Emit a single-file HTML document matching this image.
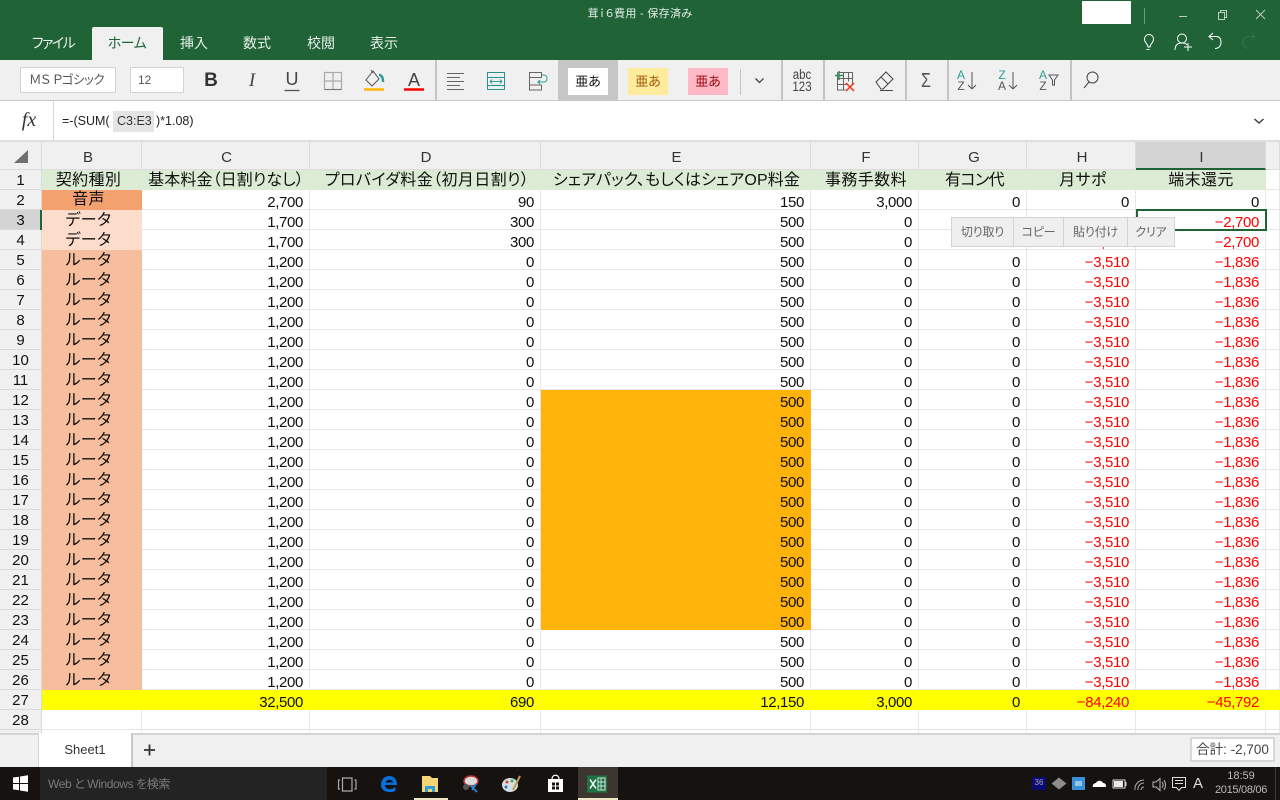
<!DOCTYPE html>
<html lang="ja"><head><meta charset="utf-8"><title>Excel</title>
<style>
*{box-sizing:border-box}
html,body{margin:0;padding:0;width:1280px;height:800px;overflow:hidden;background:#fff;font-family:"Liberation Sans","Noto Sans CJK JP",sans-serif;color:#222;font-feature-settings:"palt"}
.a{position:absolute}
.t{position:absolute;white-space:nowrap;transform:translateX(-50%);text-align:center}
svg{position:absolute;overflow:visible}
table{position:absolute;left:0;top:142px;border-collapse:separate;border-spacing:0;table-layout:fixed;width:1280px}
td,th{padding:7px 6px 0 0;height:20px;line-height:12px;font-size:15px;letter-spacing:-.35px;font-weight:normal;text-align:right;vertical-align:top;border-right:1px solid #e6e6e6;border-bottom:1px solid #e6e6e6;white-space:nowrap;overflow:hidden;color:#111}
th{background:#f0f0f0;text-align:center;padding:0;color:#333;border-color:#dcdcdc;letter-spacing:0}
tr.h th{height:28px;font-size:15px;padding-top:7px;line-height:18px}
td.n{font-size:15px;text-align:center;padding:2px 0 0;line-height:17px;border-color:#dadada;letter-spacing:0}
tr.g td{background:#dcebd4;border-color:#dcebd4;text-align:center;padding:2px 0 0;font-size:16px;letter-spacing:.4px;line-height:17px}
tr.g td.n{font-size:15px;padding-top:2px;letter-spacing:0;line-height:17px}
td.k{text-align:center;padding:3px 6px 0 0;font-size:16px;letter-spacing:.4px;line-height:16px}
td.v{background:#f3a26f;border-color:#f3a26f;padding-top:2px}
td.d{background:#fcdccb;border-color:#fcdccb}
td.u{background:#f6be9c;border-color:#f6be9c}
td.o{background:#ffb30b;border-color:#ffb30b}
tr.y td{background:#ff0;border-color:#ff0}
.r,tr.y td.r{color:#f00}
.mi{position:absolute;top:217px;height:30px;background:#efefef;border:1px solid #d4d4d4;font-size:12px;letter-spacing:-.2px;color:#666;text-align:center;line-height:28px}
</style></head><body>

<!-- title bar -->
<div class="a" style="left:0;top:0;width:1280px;height:60px;background:#1f6337"></div>
<div class="t" style="left:640px;top:6px;font-size:11px;letter-spacing:.3px;line-height:16px;color:#e4ece7">茸ｉ６費用 - 保存済み</div>
<div class="a" style="left:1082px;top:1px;width:49px;height:23px;background:#fff"></div>
<div class="a" style="left:1144px;top:8px;width:1px;height:16px;background:#6f9c80"></div>
<svg style="left:0;top:0" width="1280" height="60" fill="none" stroke="#b9cdc0" stroke-width="1">
<path d="M1179 16.500h8"/><path d="M1218.500 12.500h6v7h-6zM1220.500 12.500v-2h6v7h-2"/><path d="M1256 10l9 9M1265 10l-9 9"/>
<path d="M1148 47c0-3-3.500-4-3.500-8a4.500 4.500 0 0 1 9 0c0 4-3.500 5-3.500 8zM1146.500 49.500h3" stroke="#fff"/>
<path d="M1175 50c0-5 3-7 7-7s4 1 5 2M1182 43a4.500 4.500 0 1 0 0-9a4.500 4.500 0 0 0 0 9zM1184 47h8M1188 43v8" stroke="#fff"/>
<path d="M1213 40l-4-3.500 4-3.500M1209 36.500h7c4 0 5 3 5 6s-2 6-6 6" stroke="#fff"/>
<path d="M1251 40l4-3.500-4-3.500M1255 36.500h-7c-4 0-5 3-5 6s2 6 6 6" stroke="#34724b"/>
</svg>
<div class="a" style="left:92px;top:27px;width:71px;height:33px;background:#f0f0f0;border-radius:2px 2px 0 0"></div>
<div class="t" style="left:53px;top:33px;font-size:14px;letter-spacing:-1.500px;line-height:20px;color:#e8f0eb">ファイル</div>
<div class="t" style="left:127px;top:33px;font-size:14px;letter-spacing:-.5px;line-height:20px;color:#1f6337">ホーム</div>
<div class="t" style="left:194px;top:33px;font-size:14px;line-height:20px;color:#e8f0eb">挿入</div>
<div class="t" style="left:257px;top:33px;font-size:14px;line-height:20px;color:#e8f0eb">数式</div>
<div class="t" style="left:321px;top:33px;font-size:14px;line-height:20px;color:#e8f0eb">校閲</div>
<div class="t" style="left:384px;top:33px;font-size:14px;line-height:20px;color:#e8f0eb">表示</div>

<!-- ribbon -->
<div class="a" style="left:0;top:60px;width:1280px;height:41px;background:#f0f0f0;border-bottom:1px solid #c8c8c8"></div>
<div class="a" style="left:20px;top:67px;width:96px;height:26px;background:#fff;border:1px solid #d4d4d4;font-size:12.500px;letter-spacing:-.5px;line-height:24px;color:#555;padding-left:8px;white-space:nowrap;overflow:hidden">ＭＳ Ｐゴシック</div>
<div class="a" style="left:130px;top:67px;width:54px;height:26px;background:#fff;border:1px solid #d4d4d4;font-size:12px;line-height:24px;color:#555;padding-left:7px">12</div>
<div class="t" style="left:211px;top:69px;font-size:19px;line-height:24px;font-weight:bold;color:#333">B</div>
<div class="t" style="left:252px;top:69px;font-size:19px;line-height:24px;font-style:italic;font-family:'Liberation Serif',serif;color:#444">I</div>
<div class="t" style="left:292px;top:67px;font-size:18px;line-height:24px;color:#444">U</div>
<div class="t" style="left:414px;top:68px;font-size:18px;line-height:24px;color:#444">A</div>
<div class="a" style="left:435px;top:60px;width:2px;height:40px;background:#c4c4c4"></div>
<div class="a" style="left:558px;top:60px;width:60px;height:40px;background:#c6c6c6"></div>
<div class="a" style="left:568px;top:68px;width:40px;height:27px;background:#fff;font-size:13px;line-height:27px;text-align:center;color:#111">亜あ</div>
<div class="a" style="left:628px;top:68px;width:40px;height:27px;background:#ffeb9c;font-size:13px;line-height:27px;text-align:center;color:#9c5700">亜あ</div>
<div class="a" style="left:688px;top:68px;width:40px;height:27px;background:#ffb9c6;font-size:13px;line-height:27px;text-align:center;color:#9c0006">亜あ</div>
<div class="a" style="left:740px;top:69px;width:1px;height:26px;background:#c4c4c4"></div>
<div class="a" style="left:781px;top:60px;width:2px;height:40px;background:#c4c4c4"></div>
<div class="a" style="left:823px;top:60px;width:2px;height:40px;background:#c4c4c4"></div>
<div class="a" style="left:905px;top:60px;width:2px;height:40px;background:#c4c4c4"></div>
<div class="a" style="left:947px;top:60px;width:2px;height:40px;background:#c4c4c4"></div>
<div class="a" style="left:1070px;top:60px;width:2px;height:40px;background:#c4c4c4"></div>
<div class="t" style="left:802px;top:69px;font-size:13.500px;line-height:12px;color:#444;transform:translateX(-50%) scaleX(.85)">abc<br>123</div>
<div class="t" style="left:926px;top:69px;font-size:20px;line-height:24px;color:#555;transform:translateX(-50%) scaleX(.8)">Σ</div>
<div class="t" style="left:961px;top:70px;font-size:12px;line-height:11px;color:#555"><span style="color:#2e9c98">A</span><br>Z</div>
<div class="t" style="left:1002px;top:70px;font-size:12px;line-height:11px;color:#555"><span style="color:#2e9c98">Z</span><br>A</div>
<div class="t" style="left:1043px;top:70px;font-size:12px;line-height:11px;color:#555"><span style="color:#2e9c98">A</span><br>Z</div>
<svg style="left:0;top:0" width="1280" height="100" fill="none" stroke="#555" stroke-width="1">
<path d="M284.500 90.500h15" stroke-width="1.300"/>
<path d="M324.500 72.500h17v17h-17zM333 72.500v17M324.500 81h17" stroke="#aaa" stroke-width="1.200"/>
<path d="M324.500 89.500h17" stroke="#777"/>
<path d="M373 71l-7 9 6 6 7-7zM371 70l2 3" stroke="#555"/>
<path d="M379 75c3 0 4 3 4 7" stroke="#2e9c98" stroke-width="2.500"/>
<path d="M364 89.500h20" stroke="#ffb400" stroke-width="2.500"/>
<path d="M404 89.500h20" stroke="#f00" stroke-width="2.500"/>
<path d="M447 73.500h17M447 77.500h13M447 81.500h17M447 85.500h13M447 89.500h17" stroke="#666"/>
<path d="M487.500 72.500h17v17h-17zM487.500 77.500h17M487.500 85.500h17" stroke="#2e8f8c"/>
<path d="M490 81.500h12M490 81.500l2-2M490 81.500l2 2M502 81.500l-2-2M502 81.500l-2 2" stroke="#2e9c98"/>
<path d="M529.500 72.500h12v5h-12zM529.500 85h12v5h-12zM529.500 77.500v7.500" stroke="#666"/>
<path d="M542 75h2c4 0 4 7 0 7h-6l2-2M538 82l2 2" stroke="#2e9c98"/>
<path d="M755.500 78.500l4 4 4-4" stroke="#444" stroke-width="1.300"/>
<path d="M837.500 72.500h15v12M837.500 78.500h15M837.500 84.500h9M837.500 90h8M837.500 72.500v18M843.500 72.500v18M848.500 72.500v9" stroke="#666"/>
<path d="M835 75.500h8M839 71v9" stroke="#2e8b57" stroke-width="1.500"/>
<path d="M846 83l8 8M854 83l-8 8" stroke="#f03010" stroke-width="1.500"/>
<path d="M876 82l10-10 7 7-10 10h-2zM881 77l7 7M880 90.500h13" stroke="#444"/>
<path d="M972 72v17M972 89l-4-4M972 89l4-4M1013 72v17M1013 89l-4-4M1013 89l4-4" stroke="#555"/>
<path d="M1049 75h9l-3.500 5v5h-2v-5z" stroke="#555"/>
<path d="M1084 88l5-6" stroke="#444"/>
<path d="M1092.500 83a5.500 5.500 0 1 0 0-11a5.500 5.500 0 0 0 0 11z" stroke="#444"/>
</svg>

<!-- formula bar -->
<div class="a" style="left:0;top:101px;width:1280px;height:41px;background:#fff;border-bottom:2px solid #dedede"></div>
<div class="a" style="left:53px;top:101px;width:1px;height:39px;background:#d8d8d8"></div>
<div class="t" style="left:29px;top:108px;font-family:'Liberation Serif',serif;font-style:italic;font-size:20px;line-height:24px;color:#333">fx</div>
<div class="a" style="left:113px;top:111px;width:41px;height:21px;background:#e4e4e4"></div>
<div class="a" style="left:62px;top:113px;font-size:12.500px;line-height:17px;color:#222;white-space:nowrap">=-(SUM(</div>
<div class="a" style="left:117px;top:113px;font-size:12.500px;line-height:17px;color:#333;white-space:nowrap">C3:E3</div>
<div class="a" style="left:156px;top:113px;font-size:12.500px;line-height:17px;color:#222;white-space:nowrap">)*1.08)</div>
<svg style="left:0;top:0" width="1280" height="140" fill="none" stroke="#333" stroke-width="1.300"><path d="M1254.500 119l4.500 4 4.500-4"/></svg>

<!-- grid -->
<table>
<colgroup><col style="width:42px"><col style="width:100px"><col style="width:168px"><col style="width:231px"><col style="width:270px"><col style="width:108px"><col style="width:108px"><col style="width:109px"><col style="width:130px"><col style="width:14px"></colgroup>
<tr class="h"><th></th><th style="padding-right:7px">B</th><th style="padding-left:2px">C</th><th style="padding-left:2px">D</th><th style="padding-left:2px">E</th><th style="padding-left:3px">F</th><th style="padding-left:3px">G</th><th style="padding-left:2px">H</th><th style="background:#d4d4d4;border-bottom:2px solid #1f6337;padding-left:2px">I</th><th></th></tr>
<tr class="g"><td class="n" style="background:#f0f0f0;border-color:#dadada">1</td><td style="padding-right:6px">契約種別</td><td style="padding-left:1px;letter-spacing:.1px">基本料金（日割りなし）</td><td style="padding-left:4px">プロバイダ料金（初月日割り）</td><td style="letter-spacing:.13px;padding-left:2px">シェアパック、もしくはシェアOP料金</td><td style="padding-left:3px">事務手数料</td><td style="padding-left:4px;letter-spacing:-.6px">有コン代</td><td style="padding-left:4px">月サポ</td><td style="padding-left:1px">端末還元</td><td style="background:#fff;border-color:#e6e6e6"></td></tr>
<tr><td class="n" style="background:#f0f0f0">2</td><td class="k v">音声</td><td>2,700</td><td>90</td><td>150</td><td>3,000</td><td>0</td><td>0</td><td>0</td><td></td></tr>
<tr><td class="n" style="background:#d4d4d4">3</td><td class="k d">データ</td><td>1,700</td><td>300</td><td>500</td><td>0</td><td>0</td><td class="r">−3,510</td><td class="r">−2,700</td><td></td></tr>
<tr><td class="n" style="background:#f0f0f0">4</td><td class="k d">データ</td><td>1,700</td><td>300</td><td>500</td><td>0</td><td>0</td><td class="r">−3,510</td><td class="r">−2,700</td><td></td></tr>
<tr><td class="n" style="background:#f0f0f0">5</td><td class="k u">ルータ</td><td>1,200</td><td>0</td><td>500</td><td>0</td><td>0</td><td class="r">−3,510</td><td class="r">−1,836</td><td></td></tr>
<tr><td class="n" style="background:#f0f0f0">6</td><td class="k u">ルータ</td><td>1,200</td><td>0</td><td>500</td><td>0</td><td>0</td><td class="r">−3,510</td><td class="r">−1,836</td><td></td></tr>
<tr><td class="n" style="background:#f0f0f0">7</td><td class="k u">ルータ</td><td>1,200</td><td>0</td><td>500</td><td>0</td><td>0</td><td class="r">−3,510</td><td class="r">−1,836</td><td></td></tr>
<tr><td class="n" style="background:#f0f0f0">8</td><td class="k u">ルータ</td><td>1,200</td><td>0</td><td>500</td><td>0</td><td>0</td><td class="r">−3,510</td><td class="r">−1,836</td><td></td></tr>
<tr><td class="n" style="background:#f0f0f0">9</td><td class="k u">ルータ</td><td>1,200</td><td>0</td><td>500</td><td>0</td><td>0</td><td class="r">−3,510</td><td class="r">−1,836</td><td></td></tr>
<tr><td class="n" style="background:#f0f0f0">10</td><td class="k u">ルータ</td><td>1,200</td><td>0</td><td>500</td><td>0</td><td>0</td><td class="r">−3,510</td><td class="r">−1,836</td><td></td></tr>
<tr><td class="n" style="background:#f0f0f0">11</td><td class="k u">ルータ</td><td>1,200</td><td>0</td><td>500</td><td>0</td><td>0</td><td class="r">−3,510</td><td class="r">−1,836</td><td></td></tr>
<tr><td class="n" style="background:#f0f0f0">12</td><td class="k u">ルータ</td><td>1,200</td><td>0</td><td class="o">500</td><td>0</td><td>0</td><td class="r">−3,510</td><td class="r">−1,836</td><td></td></tr>
<tr><td class="n" style="background:#f0f0f0">13</td><td class="k u">ルータ</td><td>1,200</td><td>0</td><td class="o">500</td><td>0</td><td>0</td><td class="r">−3,510</td><td class="r">−1,836</td><td></td></tr>
<tr><td class="n" style="background:#f0f0f0">14</td><td class="k u">ルータ</td><td>1,200</td><td>0</td><td class="o">500</td><td>0</td><td>0</td><td class="r">−3,510</td><td class="r">−1,836</td><td></td></tr>
<tr><td class="n" style="background:#f0f0f0">15</td><td class="k u">ルータ</td><td>1,200</td><td>0</td><td class="o">500</td><td>0</td><td>0</td><td class="r">−3,510</td><td class="r">−1,836</td><td></td></tr>
<tr><td class="n" style="background:#f0f0f0">16</td><td class="k u">ルータ</td><td>1,200</td><td>0</td><td class="o">500</td><td>0</td><td>0</td><td class="r">−3,510</td><td class="r">−1,836</td><td></td></tr>
<tr><td class="n" style="background:#f0f0f0">17</td><td class="k u">ルータ</td><td>1,200</td><td>0</td><td class="o">500</td><td>0</td><td>0</td><td class="r">−3,510</td><td class="r">−1,836</td><td></td></tr>
<tr><td class="n" style="background:#f0f0f0">18</td><td class="k u">ルータ</td><td>1,200</td><td>0</td><td class="o">500</td><td>0</td><td>0</td><td class="r">−3,510</td><td class="r">−1,836</td><td></td></tr>
<tr><td class="n" style="background:#f0f0f0">19</td><td class="k u">ルータ</td><td>1,200</td><td>0</td><td class="o">500</td><td>0</td><td>0</td><td class="r">−3,510</td><td class="r">−1,836</td><td></td></tr>
<tr><td class="n" style="background:#f0f0f0">20</td><td class="k u">ルータ</td><td>1,200</td><td>0</td><td class="o">500</td><td>0</td><td>0</td><td class="r">−3,510</td><td class="r">−1,836</td><td></td></tr>
<tr><td class="n" style="background:#f0f0f0">21</td><td class="k u">ルータ</td><td>1,200</td><td>0</td><td class="o">500</td><td>0</td><td>0</td><td class="r">−3,510</td><td class="r">−1,836</td><td></td></tr>
<tr><td class="n" style="background:#f0f0f0">22</td><td class="k u">ルータ</td><td>1,200</td><td>0</td><td class="o">500</td><td>0</td><td>0</td><td class="r">−3,510</td><td class="r">−1,836</td><td></td></tr>
<tr><td class="n" style="background:#f0f0f0">23</td><td class="k u">ルータ</td><td>1,200</td><td>0</td><td class="o">500</td><td>0</td><td>0</td><td class="r">−3,510</td><td class="r">−1,836</td><td></td></tr>
<tr><td class="n" style="background:#f0f0f0">24</td><td class="k u">ルータ</td><td>1,200</td><td>0</td><td>500</td><td>0</td><td>0</td><td class="r">−3,510</td><td class="r">−1,836</td><td></td></tr>
<tr><td class="n" style="background:#f0f0f0">25</td><td class="k u">ルータ</td><td>1,200</td><td>0</td><td>500</td><td>0</td><td>0</td><td class="r">−3,510</td><td class="r">−1,836</td><td></td></tr>
<tr><td class="n" style="background:#f0f0f0">26</td><td class="k u">ルータ</td><td>1,200</td><td>0</td><td>500</td><td>0</td><td>0</td><td class="r">−3,510</td><td class="r">−1,836</td><td></td></tr>
<tr class="y"><td class="n" style="background:#f0f0f0;border-color:#dadada">27</td><td></td><td>32,500</td><td>690</td><td>12,150</td><td>3,000</td><td>0</td><td class="r">−84,240</td><td class="r">−45,792</td><td></td></tr>
<tr><td class="n" style="background:#f0f0f0">28</td><td></td><td></td><td></td><td></td><td></td><td></td><td></td><td></td><td></td></tr>
<tr><td class="n" style="background:#f0f0f0"></td><td></td><td></td><td></td><td></td><td></td><td></td><td></td><td></td><td></td></tr>
</table>
<svg style="left:0;top:0" width="60" height="170"><path d="M28 150v13h-14z" fill="#707070"/></svg>

<!-- selection -->
<div class="a" style="left:40px;top:210px;width:2px;height:20px;background:#1f6337"></div>
<div class="a" style="left:1136px;top:209px;width:131px;height:22px;border:2px solid #1f6337"></div>

<!-- context menu -->
<div class="mi" style="left:951px;width:63px">切り取り</div>
<div class="mi" style="left:1013px;width:51px">コピー</div>
<div class="mi" style="left:1063px;width:65px">貼り付け</div>
<div class="mi" style="left:1127px;width:48px">クリア</div>

<!-- sheet tabs -->
<div class="a" style="left:0;top:733px;width:1280px;height:34px;background:#f0f0f0;border-top:2px solid #d4d4d4"></div>
<div class="a" style="left:38px;top:733px;width:95px;height:34px;background:#fff;border-left:1px solid #d4d4d4;border-right:2px solid #c8c8c8;font-size:13px;line-height:33px;text-align:center;color:#333">Sheet1</div>
<svg style="left:0;top:0" width="1280" height="800" fill="none"><path d="M144 750h11M149.500 744.500v11" stroke="#333" stroke-width="1.800"/></svg>
<div class="a" style="left:1190px;top:737px;width:85px;height:25px;background:#fff;border:2px solid #d8d8d8;font-size:13.500px;line-height:22px;text-align:center;color:#444;white-space:nowrap">合計: -2,700</div>

<!-- taskbar -->
<div class="a" style="left:0;top:767px;width:1280px;height:33px;background:#15120f"></div>
<div class="a" style="left:40px;top:767px;width:287px;height:33px;background:#232323"></div>
<div class="a" style="left:48px;top:776px;font-size:12px;letter-spacing:-.4px;line-height:16px;color:#7a7a7a;white-space:nowrap">Web と Windows を検索</div>
<div class="a" style="left:578px;top:767px;width:40px;height:33px;background:#3d3530"></div>
<div class="a" style="left:414px;top:798px;width:34px;height:2px;background:#efe4c4"></div>
<div class="a" style="left:578px;top:798px;width:40px;height:2px;background:#efe4c4"></div>
<div class="a" style="left:1275px;top:767px;width:1px;height:33px;background:#3a3a3a"></div>
<svg style="left:0;top:0" width="1280" height="800" fill="none">
<path d="M13 777.500l6-.8v6.300h-6zM20 776.500l8-1.200v7.700h-8zM13 784h6v6.200l-6-.8zM20 784h8v7.700l-8-1.200z" fill="#fff"/>
<path d="M342.500 778h9.500v13h-9.500zM340 780h-1.500v9h1.500M354.500 780h1.500v9h-1.500" stroke="#aaa" stroke-width="1.200"/>
<path d="M381 785c0-6 4-9 8.500-9s7.500 3 7.500 9h-12c0 4 5 6 10.500 2v4c-7 3-14.500 0-14.500-6zm4.500-2.500h7.500c0-3-6-4-7.500 0z" fill="#0b6ed6"/>
<path d="M422 776h8l2 2h6v14h-16z" fill="#f4d774"/><path d="M425 786h10v6h-10z" fill="#2f9fdc"/><path d="M428 789h4v3h-4z" fill="#f4d774"/>
<ellipse cx="471" cy="781" rx="7" ry="5" fill="#ddd" stroke="#b33" stroke-width="1.500"/><path d="M470 785l7 7M476 784l-4 6" stroke="#2c86d1" stroke-width="1.800"/><circle cx="466" cy="787" r="3" fill="#555"/>
<ellipse cx="510" cy="785" rx="8" ry="7" fill="#d7dfe6"/><circle cx="507" cy="782" r="1.500" fill="#d43"/><circle cx="512" cy="781" r="1.500" fill="#4a4"/><circle cx="506" cy="787" r="1.500" fill="#27c"/>
<path d="M513 790l7-14" stroke="#c49a50" stroke-width="2"/>
<path d="M548 779h15v13h-15z" fill="#fff"/><path d="M552 779c0-5 7-5 7 0" stroke="#fff" stroke-width="1.300"/><path d="M552 782.500h3v3h-3zM556 782.500h3v3h-3zM552 786.500h3v3h-3zM556 786.500h3v3h-3z" fill="#15120f"/>
<path d="M587 775.500h20v17h-20z" fill="#1e7244"/><path d="M598 778h7v12h-7z" stroke="#fff" stroke-width=".8"/><path d="M598 782h7M598 786h7M601 778v12" stroke="#fff" stroke-width=".7"/><path d="M590 779.500l6 9M596 779.500l-6 9" stroke="#fff" stroke-width="1.500"/>
<path d="M1059 778l7.500 6-7.500 6-7.500-6z" fill="#8c8c8c" transform="translate(0 -.5)"/>
<path d="M1072 777h13v13h-13z" fill="#3b8fd6"/><path d="M1075 781h7v5h-7z" fill="#8fc8e8"/>
<path d="M1093 787c-1-3 2-4 3-4 1-3 6-3 7 0 2 0 3 1 3 4z" fill="#fff"/>
<path d="M1113 780h12v8h-12z" stroke="#ddd" stroke-width="1"/><path d="M1114 781h9v6h-9z" fill="#e8e8e8"/><path d="M1126 782v4" stroke="#ddd"/>
<path d="M1135 790a9 9 0 0 1 9-10M1138 790a6 6 0 0 1 6-7M1141 790a3 3 0 0 1 3-3" stroke="#aaa" stroke-width="1"/>
<path d="M1153 782h3l4-3.500v12l-4-3.500h-3zM1162 782c1.500 1.500 1.500 4 0 6M1164 780c2 3 2 7 0 10" stroke="#bbb" stroke-width="1"/>
<path d="M1172.500 777.500h13v10h-4l-2.500 3-2.500-3h-4zM1175 780.500h8M1175 783.500h8" stroke="#ddd" stroke-width="1"/>
</svg>
<div class="a" style="left:1032px;top:777px;width:14px;height:13px;background:#0a0a70;color:#aab;font-size:8px;line-height:12px;text-align:center">36</div>
<div class="t" style="left:1198px;top:774px;font-size:15px;line-height:20px;color:#ddd">A</div>
<div class="t" style="left:1241px;top:769px;font-size:11px;line-height:14px;color:#bbb">18:59</div>
<div class="t" style="left:1241px;top:783px;font-size:11px;line-height:14px;letter-spacing:-.3px;color:#bbb">2015/08/06</div>
</body></html>
